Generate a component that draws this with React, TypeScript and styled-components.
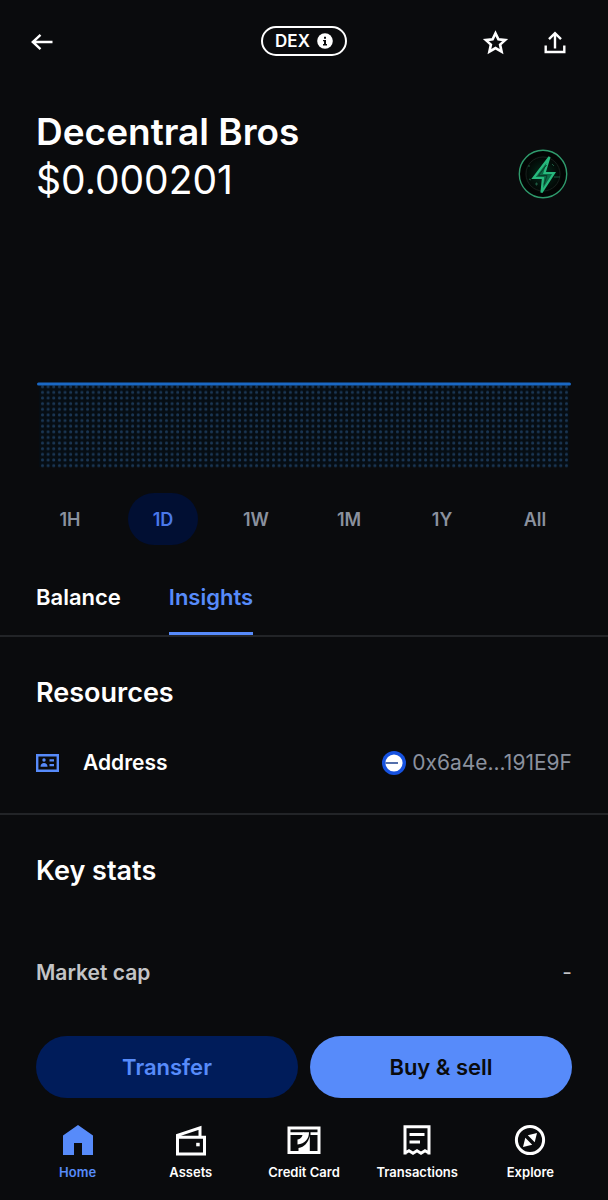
import React from "react";
import styled, { createGlobalStyle } from "styled-components";

const color = {
  bg: "#0a0b0d",
  text: "#ffffff",
  muted: "#8a919e",
  accent: "#578bfa",
  divider: "#222427",
};

const GlobalStyle = createGlobalStyle`
  *, *::before, *::after { box-sizing: border-box; }
  body {
    margin: 0;
    background: ${color.bg};
    color: ${color.text};
    font-family: Inter, "Liberation Sans", sans-serif;
  }
  h1, h2, p, dl, dd, dt { margin: 0; }
  button { font: inherit; color: inherit; border: 0; padding: 0; background: none; cursor: pointer; }
  a { color: inherit; text-decoration: none; }
  svg { display: block; }
`;

const Page = styled.div`
  min-height: 100vh;
  display: flex;
  flex-direction: column;
`;

const TopBar = styled.header`
  display: grid;
  grid-template-columns: 1fr auto 1fr;
  align-items: center;
  height: 84px;
  padding: 0 39px 0 28px;
`;

const TopActions = styled.div`
  display: flex;
  justify-content: flex-end;
  gap: 32px;
`;

const IconButton = styled.button`
  display: grid;
  place-items: center;
  width: 28px;
  height: 28px;
`;

const DexBadge = styled.button`
  display: flex;
  align-items: center;
  gap: 7px;
  height: 30px;
  margin-left: 11px;
  margin-bottom: 3px;
  padding: 0 12px;
  border: 2px solid ${color.text};
  border-radius: 15px;
  font-size: 17px;
  font-weight: 600;
`;

const Hero = styled.section`
  display: flex;
  justify-content: space-between;
  align-items: flex-end;
  padding: 24px 40px 0 36px;
`;

const HeroLine = styled.p<{ $strong?: boolean }>`
  font-size: ${(p) => (p.$strong ? 37 : 39)}px;
  font-weight: ${(p) => (p.$strong ? 600 : 400)};
  line-height: 48px;
`;

const TokenLogo = styled.div`
  padding-bottom: 5px;
`;

const ChartArea = styled.figure`
  margin: 0;
  padding: 176px 36px 0;
  svg { width: 100%; height: auto; }
`;

const Ranges = styled.div`
  display: flex;
  justify-content: space-between;
  padding: 23px 38px 0 35px;
`;

const RangeButton = styled.button<{ $active?: boolean }>`
  width: 70px;
  height: 52px;
  border-radius: 26px;
  font-size: 18px;
  font-weight: 600;
  color: ${(p) => (p.$active ? "#4a78ea" : color.muted)};
  background: ${(p) => (p.$active ? "#010f33" : "transparent")};
`;

const Tabs = styled.div`
  display: flex;
  gap: 48px;
  height: 92px;
  padding: 0 36px;
  border-bottom: 2px solid ${color.divider};
`;

const Tab = styled.button<{ $active?: boolean }>`
  padding-top: 16px;
  font-size: 22px;
  font-weight: 600;
  color: ${(p) => (p.$active ? color.accent : color.text)};
  border-bottom: 3px solid ${(p) => (p.$active ? color.accent : "transparent")};
`;

const Section = styled.section<{ $last?: boolean }>`
  padding: 38px 36px 0;
  border-bottom: ${(p) => (p.$last ? 0 : 2)}px solid ${color.divider};
`;

const SectionTitle = styled.h2`
  font-size: 27px;
  font-weight: 600;
  line-height: 36px;
`;

const Row = styled.dl<{ $top: number; $bottom: number }>`
  display: flex;
  align-items: center;
  justify-content: space-between;
  padding: ${(p) => p.$top}px 0 ${(p) => p.$bottom}px;
  font-size: 21px;
  line-height: 28px;
`;

const RowLabel = styled.dt<{ $dim?: boolean }>`
  display: flex;
  align-items: center;
  gap: 24px;
  font-weight: 600;
  color: ${(p) => (p.$dim ? "#c3c4c6" : color.text)};
`;

const RowValue = styled.dd<{ $dim?: boolean }>`
  display: flex;
  align-items: center;
  gap: 6px;
  color: ${(p) => (p.$dim ? "#c3c4c6" : color.muted)};
`;

const Footer = styled.footer`
  margin-top: auto;
`;

const Actions = styled.div`
  display: grid;
  grid-template-columns: 1fr 1fr;
  gap: 12px;
  padding: 0 36px;
`;

const ActionButton = styled.button<{ $primary?: boolean }>`
  height: 62px;
  border-radius: 31px;
  font-size: 22px;
  font-weight: 600;
  color: ${(p) => (p.$primary ? color.bg : color.accent)};
  background: ${(p) => (p.$primary ? color.accent : "#001c5a")};
`;

const Nav = styled.nav`
  display: grid;
  grid-template-columns: repeat(5, 1fr);
  padding: 26px 21px 20px;
`;

const NavItem = styled.a<{ $active?: boolean }>`
  display: flex;
  flex-direction: column;
  align-items: center;
  gap: 8px;
  font-size: 13px;
  font-weight: 600;
  line-height: 16px;
  white-space: nowrap;
  color: ${(p) => (p.$active ? color.accent : color.text)};
`;

const BackIcon = () => (
  <svg width="28" height="28" viewBox="0 0 28 28" fill="none" stroke="currentColor" strokeWidth="2.4">
    <path d="M24.500 14H5M12.500 6.800L4.800 14l7.700 7.200" />
  </svg>
);

const InfoIcon = () => (
  <svg width="16" height="16" viewBox="0 0 16 16">
    <circle cx="8" cy="8" r="7.800" fill="#fff" />
    <path d="M7 3.800h2v1.900H7zM6 7h3v4h1v1.400H6V11h1V8.300H6z" fill={color.bg} />
  </svg>
);

const StarIcon = () => (
  <svg width="28" height="28" viewBox="0 0 28 28" fill="none" stroke="currentColor" strokeWidth="2.600">
    <path d="M14.500 5.200l2.900 6.200 6.700.7-5 4.500 1.500 7.100-6.100-3.600-6.100 3.600 1.500-7.100-5-4.500 6.700-.7z" />
  </svg>
);

const ShareIcon = () => (
  <svg width="28" height="28" viewBox="0 0 28 28" fill="none" stroke="currentColor" strokeWidth="2.400">
    <path d="M14 20.500V5.500M8 11.200l6-6 6 6M4.700 17.500v6.500h18.600v-6.500" />
  </svg>
);

const BoltLogo = () => (
  <svg width="50" height="50" viewBox="0 0 50 50" fill="none">
    <defs>
      <radialGradient id="glow">
        <stop offset="0" stopColor="#05301f" />
        <stop offset="0.500" stopColor="#03120c" />
        <stop offset="0.800" stopColor="#020403" />
      </radialGradient>
    </defs>
    <circle cx="25" cy="25" r="23.700" fill="url(#glow)" stroke="#2f9a6c" strokeWidth="1.400" />
    <circle cx="25" cy="25" r="17" stroke="#1d2622" strokeWidth="0.800" />
    <path d="M10 17h2M34 15l2 2M36 28h6M17 35h3M18.500 33.500v3M11 30l2 1" stroke="#1d5a41" />
    <path d="M31.500 8L15.500 29H25L23.500 43.500 36 24h-9.500z" fill="#0b6b46" stroke="#27b97d" strokeWidth="2.200" />
    <path d="M28.500 16L20.500 26.500h8.500L26 35.500" stroke="#0a3d29" />
  </svg>
);

const DOT = 5.634;
const PriceChart = () => (
  <svg viewBox="0 0 536 90" role="img" aria-label="Price over one day">
    <defs>
      <pattern id="dots" x="5" y="4" width={DOT} height={DOT} patternUnits="userSpaceOnUse">
        <circle cx="1.500" cy="2.700" r="1.500" fill="#1a3654" />
      </pattern>
    </defs>
    <rect x="3" y="4" width="530" height="83" fill="#060d13" />
    <rect x="5" y="4" width="527" height="84" fill="url(#dots)" />
    <path d="M2.500 4h531" stroke="#1a68c4" strokeWidth="3" strokeLinecap="round" />
  </svg>
);

const AddressIcon = () => (
  <svg width="23" height="18" viewBox="0 0 23 18" fill={color.accent}>
    <path fillRule="evenodd" d="M0 0h23v18H0zM2.400 2.400v13.200h18.200V2.400z" />
    <circle cx="8" cy="6" r="1.700" />
    <path d="M4.500 12.700c0-2.400 1.500-3.700 3.500-3.700s3.500 1.300 3.500 3.700zM13.500 5.300H18v2.200h-4.500zM13.500 10H18v2.200h-4.500z" />
  </svg>
);

const NetworkIcon = () => (
  <svg width="24" height="24" viewBox="0 0 24 24">
    <circle cx="12" cy="12" r="12" fill="#1652e0" />
    <circle cx="12" cy="12" r="8.600" fill="#fff" />
    <path d="M3.500 12H16" stroke="#1b3f8f" strokeWidth="1.500" />
  </svg>
);

const HomeIcon = () => (
  <svg width="32" height="32" viewBox="0 0 32 32" fill="currentColor">
    <path d="M16 1l15 10.500V31H20V19h-8v12H1V11.500z" />
  </svg>
);

const WalletIcon = () => (
  <svg width="32" height="32" viewBox="0 0 32 32" fill="none" stroke="currentColor" strokeWidth="3">
    <path d="M2.500 13.200h27v16.800H2.500zM2.500 13.400v-2L25 3.800v9.500" />
    <rect x="21.200" y="18.800" width="3.500" height="3.500" fill="currentColor" stroke="none" />
  </svg>
);

const CardIcon = () => (
  <svg width="34" height="32" viewBox="0 0 34 32" fill="none" stroke="currentColor">
    <path d="M2 4h30v24.500H2z" strokeWidth="3" />
    <path d="M3 9.600h13.500M23.500 9.600H31" strokeWidth="2.600" />
    <path d="M22 8.300C22 15 18 19.800 10.500 20.500v-5c3.500-.5 5.300-3 5.500-7.200z" fill="currentColor" stroke="none" />
    <path d="M22.800 12v16.500H11.500V24c6-1 9.500-5 11.300-12z" fill="currentColor" stroke="none" />
  </svg>
);

const ReceiptIcon = () => (
  <svg width="32" height="32" viewBox="0 0 32 32" fill="none" stroke="currentColor" strokeWidth="3">
    <path d="M4 30.500V2.800h24v27.700M4 29l4-2.300 4 2.500 4-2.500 4 2.500 4-2.500 4 2.300M8.500 10.500h15M8.500 18H19" />
  </svg>
);

const CompassIcon = () => (
  <svg width="32" height="32" viewBox="0 0 32 32">
    <circle cx="16" cy="16" r="13.600" fill="none" stroke="currentColor" strokeWidth="3" />
    <path d="M23 9l-2.300 9.200-6.900-6.900zM9 23l2.300-9.200 6.900 6.900z" fill="currentColor" />
  </svg>
);

const ranges = ["1H", "1D", "1W", "1M", "1Y", "All"];

const navItems = [
  { label: "Home", Icon: HomeIcon },
  { label: "Assets", Icon: WalletIcon },
  { label: "Credit Card", Icon: CardIcon },
  { label: "Transactions", Icon: ReceiptIcon },
  { label: "Explore", Icon: CompassIcon },
];

export default function App() {
  return (
    <Page>
      <GlobalStyle />
      <TopBar>
        <IconButton aria-label="Back"><BackIcon /></IconButton>
        <DexBadge>DEX <InfoIcon /></DexBadge>
        <TopActions>
          <IconButton aria-label="Add to watchlist"><StarIcon /></IconButton>
          <IconButton aria-label="Share"><ShareIcon /></IconButton>
        </TopActions>
      </TopBar>
      <main>
        <Hero>
          <div>
            <HeroLine as="h1" $strong>Decentral Bros</HeroLine>
            <HeroLine>$0.000201</HeroLine>
          </div>
          <TokenLogo><BoltLogo /></TokenLogo>
        </Hero>
        <ChartArea><PriceChart /></ChartArea>
        <Ranges>
          {ranges.map((r) => (
            <RangeButton key={r} $active={r === "1D"} aria-pressed={r === "1D"}>{r}</RangeButton>
          ))}
        </Ranges>
        <Tabs role="tablist">
          <Tab role="tab" aria-selected={false}>Balance</Tab>
          <Tab role="tab" aria-selected $active>Insights</Tab>
        </Tabs>
        <Section>
          <SectionTitle>Resources</SectionTitle>
          <Row $top={38} $bottom={36}>
            <RowLabel><AddressIcon />Address</RowLabel>
            <RowValue><NetworkIcon />0x6a4e...191E9F</RowValue>
          </Row>
        </Section>
        <Section $last>
          <SectionTitle>Key stats</SectionTitle>
          <Row $top={70} $bottom={24}>
            <RowLabel $dim>Market cap</RowLabel>
            <RowValue $dim>-</RowValue>
          </Row>
        </Section>
      </main>
      <Footer>
        <Actions>
          <ActionButton>Transfer</ActionButton>
          <ActionButton $primary>Buy &amp; sell</ActionButton>
        </Actions>
        <Nav aria-label="Main">
          {navItems.map(({ label, Icon }) => (
            <NavItem key={label} href="#" $active={label === "Home"}>
              <Icon />
              {label}
            </NavItem>
          ))}
        </Nav>
      </Footer>
    </Page>
  );
}
